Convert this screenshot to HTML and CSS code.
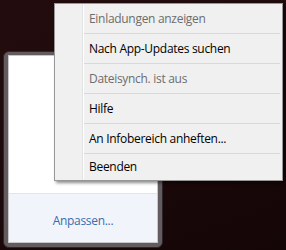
FILE: index.html
```html
<!DOCTYPE html>
<html lang="de">
<head>
<meta charset="UTF-8">
<meta name="viewport" content="width=device-width, initial-scale=1.0">
<title>Infobereich Menü</title>
<link rel="stylesheet" href="styles.css">
</head>
<body>
<div class="desktop">
    <!-- flyout window behind the menu -->
    <div class="flyout">
        <div class="flyout-inner">
            <div class="flyout-body"></div>
            <div class="flyout-footer">
                <a href="#" class="link">Anpassen...</a>
            </div>
        </div>
    </div>

    <!-- context menu -->
    <ul class="menu">
        <li class="item disabled">Einladungen anzeigen</li>
        <li class="sep"></li>
        <li class="item">Nach App-Updates suchen</li>
        <li class="sep"></li>
        <li class="item disabled">Dateisynch. ist aus</li>
        <li class="sep"></li>
        <li class="item">Hilfe</li>
        <li class="sep"></li>
        <li class="item">An Infobereich anheften...</li>
        <li class="sep"></li>
        <li class="item last">Beenden</li>
    </ul>
</div>
</body>
</html>
```

FILE: styles.css
```css
body {
    margin: 0;
    padding: 0;
    font-family: "Open Sans", "Noto Sans", sans-serif;
    font-size: 12px;
    letter-spacing: -0.3px;
    background-color: #1a0809;
}

.desktop {
    position: relative;
    width: 286px;
    height: 250px;
    box-sizing: border-box;
    padding: 51px 0 0 3px;
    background: linear-gradient(160deg, #230c0e 0%, #1c090b 55%, #140506 100%);
    overflow: hidden;
}

.flyout {
    width: 160px;
    height: 197px;
    box-sizing: border-box;
    padding: 3px 4px 4px 4px;
    background-color: #625b5f;
    border: 1px solid #2e2528;
    border-radius: 6px;
    display: flex;
}

.flyout-inner {
    flex: 1;
    display: flex;
    flex-direction: column;
    border: 1px solid #c9c6c8;
    background-color: #fff;
}

.flyout-body {
    flex: 1;
    background-color: #fff;
}

.flyout-footer {
    height: 48px;
    border-top: 1px solid #dfe5ee;
    background-color: #f1f4fa;
    display: flex;
    align-items: center;
    justify-content: center;
}

.link {
    color: #3a6cae;
    text-decoration: none;
    padding-top: 4px;
}

.menu {
    position: absolute;
    left: 54px;
    top: 3px;
    width: 229px;
    height: 178px;
    box-sizing: border-box;
    margin: 0;
    padding: 0;
    list-style: none;
    background-color: #f0f0f0;
    border: 1px solid #979797;
    box-shadow: 2px 2px 3px rgba(0, 0, 0, 0.45);
    overflow: hidden;
}

/* icon gutter */
.menu::before {
    content: "";
    position: absolute;
    left: 27px;
    top: 1px;
    bottom: 1px;
    width: 1px;
    background-color: #e2e3e3;
    border-right: 1px solid #fff;
}

.item {
    height: 29px;
    line-height: 29px;
    padding-left: 34px;
    color: #000;
    white-space: nowrap;
}

.item.last {
    height: 26px;
    line-height: 26px;
}

.item.disabled {
    color: #6d6d6d;
}

.sep {
    height: 1px;
    margin: 0 2px 0 28px;
    background-color: #d9d9d9;
}
```
